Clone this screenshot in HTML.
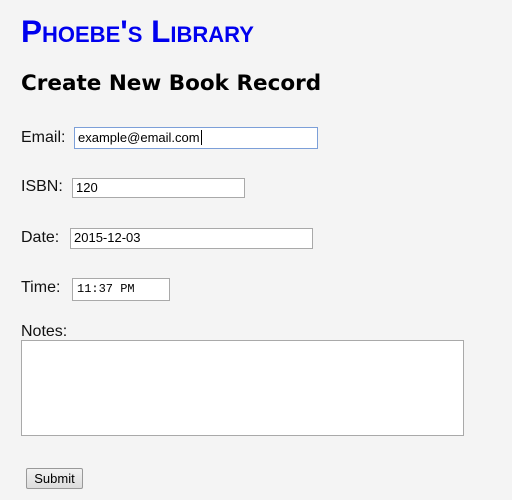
<!DOCTYPE html>
<html><head><style>
body{margin:0;background:#f4f4f4;width:512px;height:500px;position:relative;overflow:hidden;font-family:"Liberation Sans",Arial,sans-serif;}
.a{position:absolute;white-space:nowrap}
.t{left:21px;top:11px;font-size:31.5px;font-weight:bold;color:#0000ee;font-variant:small-caps;line-height:40px;letter-spacing:0px}
.h{left:21px;top:69px;font-family:"DejaVu Sans",Verdana,sans-serif;font-weight:bold;font-size:21.5px;line-height:30px;color:#000}
.l{font-size:16px;color:#111;line-height:18px}
.in{position:absolute;box-sizing:border-box;background:#fff;border:1px solid #a9a9a9;font-size:13px;line-height:18px;padding:0 0 0 3px;color:#000}
.btn{position:absolute;left:26px;top:468px;width:57px;height:21px;box-sizing:border-box;border:1px solid #999;border-radius:2px;background:linear-gradient(#f2f2f2,#dcdcdc);font-size:13px;text-align:center;line-height:19px;color:#000}
</style></head><body>
<div class="a t">Phoebe's Library</div>
<div class="a h">Create New Book Record</div>
<div class="a l" style="left:21px;top:129px">Email:</div>
<div class="in" style="left:74px;top:127px;width:244px;height:22px;border-color:#7c9fd8;padding-top:1px">example@email.com<span style="border-left:1px solid #000;margin-left:1px"></span></div>
<div class="a l" style="left:21px;top:178px">ISBN:</div>
<div class="in" style="left:72px;top:178px;width:173px;height:20px">120</div>
<div class="a l" style="left:21px;top:229px">Date:</div>
<div class="in" style="left:70px;top:228px;width:243px;height:21px">2015-12-03</div>
<div class="a l" style="left:21px;top:279px">Time:</div>
<div class="in" style="left:72px;top:278px;width:98px;height:23px;font-family:'Liberation Mono',monospace;font-size:12px;line-height:21px;padding-left:4px">11:37 PM</div>
<div class="a l" style="left:21px;top:323px">Notes:</div>
<div class="in" style="left:21px;top:340px;width:443px;height:96px"></div>
<div class="btn">Submit</div>
</body></html>
